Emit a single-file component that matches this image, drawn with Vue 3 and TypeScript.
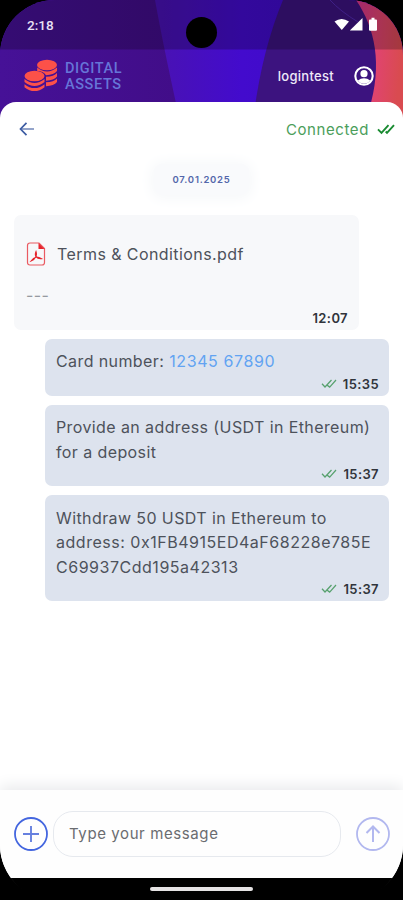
<script setup lang="ts">
interface Message {
  lines: string[]
  link?: string
  time: string
}

const messages: Message[] = [
  { lines: ['Card number: '], link: '12345 67890', time: '15:35' },
  { lines: ['Provide an address (USDT in Ethereum)', 'for a deposit'], time: '15:37' },
  {
    lines: ['Withdraw 50 USDT in Ethereum to', 'address: 0x1FB4915ED4aF68228e785E', 'C69937Cdd195a42313'],
    time: '15:37',
  },
]

const hasLongCode = (line: string): boolean => /\w{16,}/.test(line)
</script>

<template>
  <div class="device">
    <div class="screen">
      <svg class="backdrop" viewBox="0 0 403 130" aria-hidden="true">
        <defs>
          <linearGradient id="left" x1="0" y1="0" x2="1" y2="0">
            <stop offset="0" stop-color="#461197" />
            <stop offset="1" stop-color="#410d88" />
          </linearGradient>
          <linearGradient id="mid" x1="0" y1="0" x2="1" y2="0">
            <stop offset="0.4" stop-color="#4912b4" />
            <stop offset="0.6" stop-color="#430bcd" />
            <stop offset="1" stop-color="#3b0cc4" />
          </linearGradient>
          <linearGradient id="coral" x1="0" y1="0" x2="1" y2="0.25">
            <stop offset="0" stop-color="#d83590" />
            <stop offset="0.5" stop-color="#e04470" />
            <stop offset="1" stop-color="#d94b50" />
          </linearGradient>
        </defs>
        <rect width="403" height="130" fill="url(#mid)" />
        <path d="M155 0H0V130H182Q165 55 155 0Z" fill="url(#left)" />
        <path d="M283 0Q260 55 252 130H403V0Z" fill="#3c137f" />
        <path d="M356 0C375 28 383 64 369 110V130H403V0Z" fill="url(#coral)" />
        <path d="M330 0Q340 11 358 22" fill="none" stroke="#522ab0" stroke-width="1" />
        <rect width="403" height="49.500" fill="#000" opacity="0.24" />
      </svg>
      <div class="camera"></div>

      <header class="status">
        <span>2:18</span>
        <svg width="44" height="16" viewBox="0 0 44 16" fill="#fff">
          <path d="M.5 4.600Q7.500-.8 15 4.600L7.800 13Z" />
          <path d="M28.500 1V13.500H15.800Z" />
          <path d="M37.500.8h3v1.600H42q1 0 1 1V12.800q0 1-1 1h-6q-1 0-1-1V3.400q0-1 1-1h1.500Z" />
        </svg>
      </header>

      <div class="brand-bar">
        <svg class="coins" width="34" height="34" viewBox="0 0 34 34">
          <g fill="#fc5149">
            <ellipse cx="23" cy="6" rx="10" ry="5.300" />
            <path d="M13.200 8.500Q23 16.500 33 8.500v3.500q-3 4-11 4.200Q19 12 13.200 12Z" />
            <path d="M22 17.800Q30 17.500 33 14v3.500Q30 21.300 22 21.700Z" />
            <path d="M22 23.300Q30 23 33 19.500V23Q30 26.800 22 27.200Z" />
            <ellipse cx="10.500" cy="17" rx="10" ry="5.200" />
            <path d="M.5 20Q10.500 28 20.500 20V23Q10.500 31 .5 23Z" />
            <path d="M.5 25.200Q10.500 33 20.500 25.200V28.200Q10.500 36 .5 28.200Z" />
          </g>
        </svg>
        <div class="brand">DIGITAL<br />ASSETS</div>
        <span class="user">logintest</span>
        <svg class="avatar" width="20" height="20" viewBox="0 0 20 20">
          <circle cx="10" cy="10" r="8.700" fill="none" stroke="#fff" stroke-width="2.100" />
          <circle cx="10" cy="7.700" r="3.600" fill="#fff" />
          <path d="M3.500 14.700Q10 9.800 16.500 14.700Q10 21 3.500 14.700Z" fill="#fff" />
        </svg>
      </div>

      <main class="sheet">
        <div class="toolbar">
          <svg width="16" height="14" viewBox="0 0 16 14" fill="none" stroke-width="1.700">
            <path d="M1.500 7H15" stroke="#7186b9" />
            <path d="M7.500.8L1.500 7l6 6.200" stroke="#3e5da3" />
          </svg>
          <span class="connected">Connected</span>
          <svg width="18" height="11" viewBox="0 0 18 11" fill="none" stroke="#198b31" stroke-width="1.900">
            <path d="M1 5.300l3.500 3.500L11.500 1.200M8.700 7.500l1.300 1.300L17 1.200" />
          </svg>
        </div>

        <div class="date">07.01.2025</div>

        <section class="chat">
          <article class="file">
            <div class="file-row">
              <svg width="20" height="24" viewBox="0 0 20 24" fill="none" stroke="#e6252d">
                <path d="M4 1h9l5.500 5.500V20.500q0 2.500-2.500 2.500H4q-2.500 0-2.500-2.500v-17Q1.500 1 4 1Z" stroke-width="1.200" opacity=".75" />
                <path d="M12.500 1v6h6Z" fill="#e6252d" stroke="none" />
                <path d="M10 9.500q1 3-.2 5.300Q8.600 17.500 5 19q2.500-3.400 5-3.800 2.500-.3 5.500 1.500-3.500.5-5.500-2-1.300-2.500 0-5.200Z" stroke-width="1.100" />
              </svg>
              <span>Terms &amp; Conditions.pdf</span>
            </div>
            <div class="dashes">---</div>
            <div class="meta">12:07</div>
          </article>

          <article v-for="(message, i) in messages" :key="i" class="bubble">
            <div v-for="line in message.lines" :key="line" class="line" :class="{ code: hasLongCode(line) }">{{ line }}<span v-if="message.link" class="link">{{ message.link }}</span></div>
            <div class="meta">
              <svg width="16" height="10" viewBox="0 0 16 10" fill="none" stroke="#57a16e" stroke-width="1.250">
                <path d="M1 4.800l3 3.200L10.500 1M7.500 7l1.200 1.200L15 1M5.500 5.500l2.500 2.300" />
              </svg>
              <span>{{ message.time }}</span>
            </div>
          </article>
        </section>

        <footer class="composer">
          <svg width="34" height="34" viewBox="0 0 34 34" fill="none">
            <circle cx="17" cy="17" r="16" stroke="#4466df" stroke-width="1.800" />
            <path d="M9 17h16M17 9v16" stroke="#6680df" stroke-width="1.900" />
          </svg>
          <div class="input">Type your message</div>
          <svg width="34" height="34" viewBox="0 0 34 34" fill="none" stroke="#b2b8ef">
            <circle cx="17" cy="17" r="16" stroke-width="1.800" />
            <path d="M17 25V9.500M10.500 16L17 9.500l6.500 6.500" stroke-width="2" />
          </svg>
        </footer>
      </main>
      <div class="nav"><div class="handle"></div></div>
    </div>
  </div>
</template>

<style>
body {
  margin: 0;
  background: #000;
}
</style>

<style scoped>
.device {
  width: 403px;
  height: 900px;
  background: #000;
  overflow: hidden;
  font-family: Inter, 'Liberation Sans', sans-serif;
}
.screen {
  position: relative;
  display: flex;
  flex-direction: column;
  height: 900px;
  border-radius: 55px;
  overflow: hidden;
}
.backdrop {
  position: absolute;
  top: 0;
  left: 0;
  width: 403px;
  height: 130px;
}
.camera {
  position: absolute;
  top: 17px;
  left: 186px;
  width: 31px;
  height: 31px;
  border-radius: 50%;
  background: #000;
}
.status {
  position: relative;
  box-sizing: border-box;
  height: 50px;
  padding: 0 25px 0 27px;
  display: flex;
  align-items: center;
  justify-content: space-between;
  color: #e9e1f4;
  font-family: Roboto, sans-serif;
  font-size: 13.500px;
  font-weight: 500;
}
.brand-bar {
  position: relative;
  box-sizing: border-box;
  height: 52px;
  padding: 0 29px 0 24px;
  display: flex;
  align-items: center;
}
.brand {
  flex: 1;
  margin-left: 7px;
  padding-top: 1px;
  color: #6675d8;
  font-family: Roboto, sans-serif;
  font-size: 14.500px;
  font-weight: 500;
  line-height: 15.500px;
  letter-spacing: 0.6px;
}
.user {
  color: #eee9f8;
  font-size: 13px;
  font-weight: 500;
  letter-spacing: 0.3px;
}
.avatar {
  margin-left: 20px;
}
.sheet {
  position: relative;
  flex: 1;
  display: flex;
  flex-direction: column;
  background: #fff;
  border-radius: 16px 16px 0 0;
}
.toolbar {
  display: flex;
  align-items: center;
  height: 54px;
  padding: 0 8px 0 19px;
}
.connected {
  margin-left: auto;
  margin-right: 8px;
  color: #4b9e5b;
  font-size: 15px;
  letter-spacing: 0.6px;
}
.date {
  align-self: center;
  margin-top: 8px;
  padding: 0 18px;
  height: 31px;
  line-height: 31px;
  border-radius: 8px;
  background: #f9fafc;
  box-shadow: 0 1px 14px 3px #f6f8fa;
  color: #5367ab;
  font-size: 9.500px;
  font-weight: 600;
  letter-spacing: 0.75px;
}
.chat {
  display: flex;
  flex-direction: column;
  flex: 1;
  gap: 9px;
  padding: 19.500px 14px 0;
  font-size: 16px;
  letter-spacing: 0.4px;
  color: #4d525b;
}
.file {
  box-sizing: border-box;
  width: 345px;
  height: 115px;
  padding: 26px 11px 0 12px;
  border-radius: 7px;
  background: #f7f8fa;
}
.file-row {
  display: flex;
  align-items: center;
  gap: 11px;
  height: 27px;
  letter-spacing: 0.42px;
}
.dashes {
  margin-top: 15px;
  height: 25px;
  line-height: 25px;
  color: #969aa0;
}
.meta {
  display: flex;
  align-items: center;
  justify-content: flex-end;
  gap: 6px;
  height: 20px;
  font-size: 13px;
  font-weight: 600;
  color: #30343b;
}
.bubble {
  box-sizing: border-box;
  align-self: flex-end;
  width: 344px;
  padding: 10.500px 10px 2px 11px;
  border-radius: 7px;
  background: #dde3ee;
}
.line {
  line-height: 24.500px;
  white-space: pre;
}
.line.code {
  letter-spacing: 0.52px;
}
.link {
  color: #62a3f2;
  letter-spacing: 0.62px;
}
.composer {
  box-sizing: border-box;
  height: 88px;
  padding: 0 13px 0 14px;
  display: flex;
  align-items: center;
  background: #fefefe;
  box-shadow: 0 -4px 14px #e9eaec;
}
.input {
  box-sizing: border-box;
  width: 288px;
  height: 46px;
  margin: 0 auto 0 5px;
  padding-left: 15px;
  line-height: 44px;
  border: 1px solid #e6e9ee;
  border-radius: 20px;
  color: #6a6c70;
  font-size: 15px;
  letter-spacing: 0.6px;
}
.nav {
  position: relative;
  height: 22px;
  display: flex;
  align-items: center;
  justify-content: center;
  background: #000;
}
.handle {
  width: 103px;
  height: 4px;
  border-radius: 3px;
  background: #e5e3e4;
}
</style>
